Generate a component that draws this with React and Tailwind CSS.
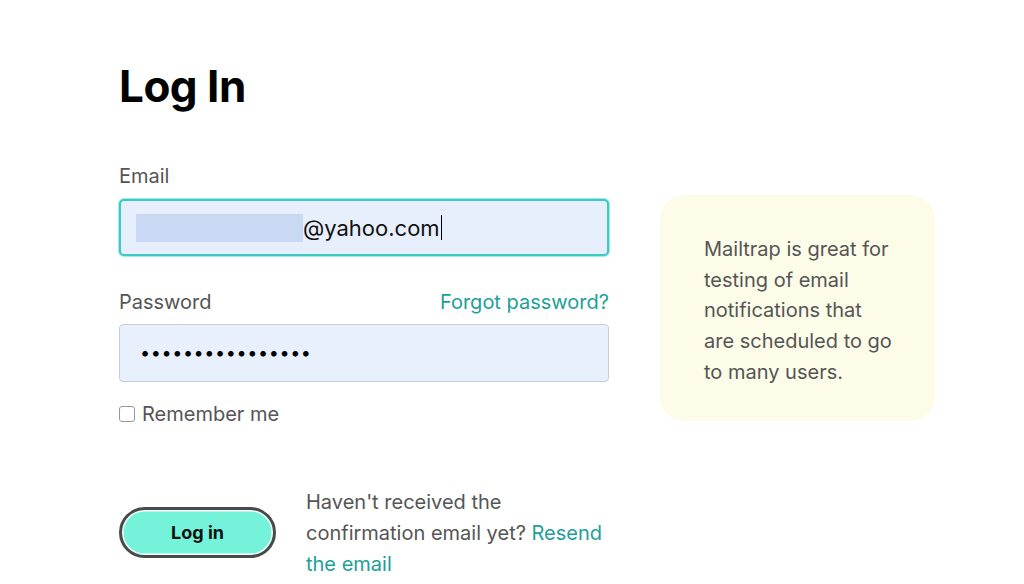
export default function App() {
  return (
    <div className="w-[1024px] h-[584px] bg-white overflow-hidden font-['Inter',sans-serif]">
      <div className="flex pl-[119px] pt-[58px]">
        <div className="w-[490px] flex flex-col">
          <h1 className="text-[44px] leading-[56px] font-bold text-black tracking-[-0.5px]">Log In</h1>
          <label className="mt-[50px] text-[20px] leading-[24px] text-[#555]">Email</label>
          <div className="mt-[11px] h-[57px] rounded-[5px] border-2 border-[#3cc8c4] shadow-[0_0_0_1px_#9eeee9] bg-[#e8effc] flex items-center pl-[15px]">
            <span className="w-[167px] h-[28px] bg-[#c9d9f4]"></span>
            <span className="text-[22px] text-[#111] leading-[28px]">@yahoo.com</span>
            <span className="w-[1.5px] h-[25px] bg-black ml-[1px]"></span>
          </div>
          <div className="mt-[33px] flex justify-between items-center h-[26px]">
            <span className="text-[20px] text-[#555]">Password</span>
            <a className="text-[20px] text-[#1e9f98]">Forgot password?</a>
          </div>
          <div className="mt-[9px] h-[58px] rounded-[4px] border border-[#c9cdd4] bg-[#e8f0fd] flex items-center pl-[20px]">
            <span className="text-[18px] text-black tracking-[0.6px] leading-none">••••••••••••••••</span>
          </div>
          <div className="mt-[20px] flex items-center gap-[7px]">
            <span className="w-[16px] h-[16px] rounded-[3px] border border-[#999] bg-white"></span>
            <span className="text-[20px] text-[#555] leading-[24px]">Remember me</span>
          </div>
          <div className="mt-[61px] flex items-start">
            <button className="mt-[20px] w-[157px] h-[51px] rounded-full border-[3px] border-[#4a4a4a] bg-[#74f3da] shadow-[inset_0_0_0_1.5px_#ffffff] text-[18px] font-bold text-[#111] leading-none">Log in</button>
            <p className="ml-[30px] w-[300px] text-[20px] leading-[31px] text-[#555]">
              Haven't received the confirmation email yet? <a className="text-[#1e9f98]">Resend the email</a>
            </p>
          </div>
        </div>
        <div className="ml-[51px] mt-[137px] w-[275px] h-[226px] rounded-[24px] bg-[#fdfce9] pl-[44px] pt-[39px]">
          <p className="w-[190px] text-[20px] leading-[30.7px] text-[#555]">
            Mailtrap is great for testing of email notifications that are scheduled to go to many users.
          </p>
        </div>
      </div>
    </div>
  );
}
